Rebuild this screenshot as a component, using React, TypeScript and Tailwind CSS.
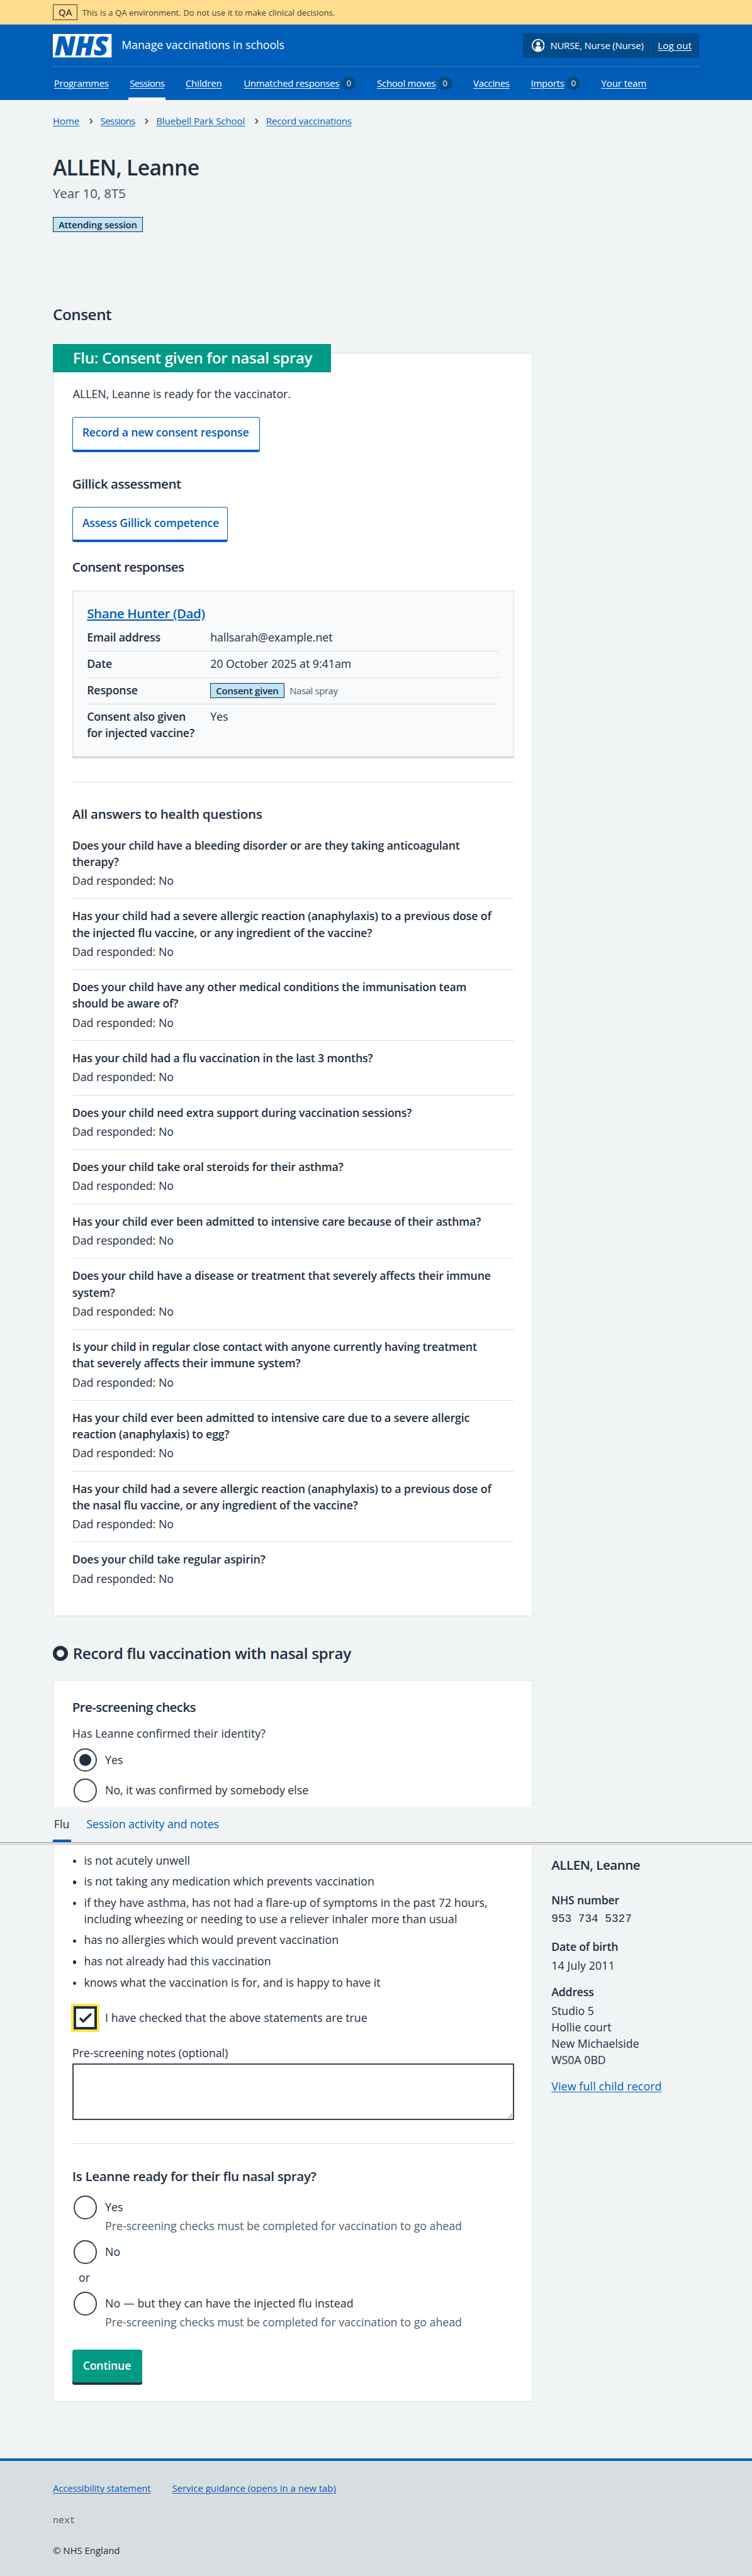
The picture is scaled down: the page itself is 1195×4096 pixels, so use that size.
import type { ReactNode } from "react";

const INK = "text-[#202e40]";

const navItems = [
  { label: "Programmes", box: "w-[93px]", track: "tracking-[-0.02em]" },
  { label: "Sessions", box: "w-[59px]", track: "tracking-[-0.04em]", active: true },
  { label: "Children", box: "w-[63px]", track: "tracking-[-0.01em]" },
  { label: "Unmatched responses", box: "w-[191px]", track: "tracking-[-0.017em]", count: 0 },
  { label: "School moves", box: "w-[128px]", track: "tracking-[-0.015em]", count: 0 },
  { label: "Vaccines", box: "w-[62px]", track: "tracking-[-0.02em]" },
  { label: "Imports", box: "w-[84px]", track: "tracking-[-0.015em]", count: 0 },
  { label: "Your team", box: "w-[77px]", track: "tracking-[-0.003em]" },
];

const questions: string[][] = [
  ["Does your child have a bleeding disorder or are they taking anticoagulant", "therapy?"],
  ["Has your child had a severe allergic reaction (anaphylaxis) to a previous dose of", "the injected flu vaccine, or any ingredient of the vaccine?"],
  ["Does your child have any other medical conditions the immunisation team", "should be aware of?"],
  ["Has your child had a flu vaccination in the last 3 months?"],
  ["Does your child need extra support during vaccination sessions?"],
  ["Does your child take oral steroids for their asthma?"],
  ["Has your child ever been admitted to intensive care because of their asthma?"],
  ["Does your child have a disease or treatment that severely affects their immune", "system?"],
  ["Is your child in regular close contact with anyone currently having treatment", "that severely affects their immune system?"],
  ["Has your child ever been admitted to intensive care due to a severe allergic", "reaction (anaphylaxis) to egg?"],
  ["Has your child had a severe allergic reaction (anaphylaxis) to a previous dose of", "the nasal flu vaccine, or any ingredient of the vaccine?"],
  ["Does your child take regular aspirin?"],
];

const statements: string[][] = [
  ["is not acutely unwell"],
  ["is not taking any medication which prevents vaccination"],
  ["if they have asthma, has not had a flare-up of symptoms in the past 72 hours,", "including wheezing or needing to use a reliever inhaler more than usual"],
  ["has no allergies which would prevent vaccination"],
  ["has not already had this vaccination"],
  ["knows what the vaccination is for, and is happy to have it"],
];

function Lines({ lines }: { lines: string[] }) {
  return (
    <>
      {lines.map((line) => (
        <span key={line} className="block whitespace-nowrap">{line}</span>
      ))}
    </>
  );
}

function QaBanner() {
  return (
    <div className="flex h-[42px] w-full items-center bg-[#ffdc8e] pl-[90px] text-[#4a3b3c]">
      <span className="flex h-[26px] w-[42px] items-center justify-center border border-[#4a3b3c] text-[16px] leading-6 font-semibold">QA</span>
      <span className="ml-2 pt-px text-[14px] leading-6 tracking-[0.006em] whitespace-nowrap">
        This is a QA environment. Do not use it to make clinical decisions.
      </span>
    </div>
  );
}

function Header() {
  return (
    <header className="h-[128px] w-full bg-[#005eb8] text-white">
      <div className="ml-[90px] flex h-[72px] w-[1101px] items-center border-b border-[#3a7cbc]">
        <svg className="h-10 w-[100px] overflow-visible" viewBox="0 0 100 40" role="img" aria-label="NHS">
          <rect width="100" height="40" fill="#fff" />
          <text x="3" y="36.2" fontFamily="Open Sans" fontSize="46" fontWeight="800" fontStyle="italic" fill="#005eb8" stroke="#005eb8" strokeWidth="0.8" textLength="91" lengthAdjust="spacingAndGlyphs">NHS</text>
        </svg>
        <span className="ml-[17px] pb-[3px] text-[19px] leading-7 whitespace-nowrap">Manage vaccinations in schools</span>
        <div className="ml-auto flex h-[42px] w-[300px] items-stretch rounded bg-[#004b88] text-[16px] leading-6 whitespace-nowrap">
          <div className="flex w-[216px] items-center pl-[14px]">
            <svg className="h-[22px] w-[22px]" viewBox="0 0 22 22" fill="none">
              <circle cx="11" cy="11" r="10" stroke="#fff" strokeWidth="2" />
              <circle cx="11" cy="8" r="3.3" fill="#fff" />
              <path d="M6 18v-2c0-2.200 1.300-3.600 3.200-3.600h3.600c1.900 0 3.200 1.400 3.200 3.600v2A9 9 0 0 1 11 20.500 9 9 0 0 1 6 18Z" fill="#fff" />
            </svg>
            <span className="ml-[10px] tracking-[-0.013em]">NURSE, Nurse (Nurse)</span>
          </div>
          <div className="my-px flex items-center border-l border-[#005eb8] pl-3">
            <a className="tracking-[0.018em] underline decoration-1 underline-offset-2">Log out</a>
          </div>
        </div>
      </div>
      <nav className="flex h-14 gap-9 pl-[92px] text-[16px] leading-6">
        {navItems.map((item) => (
          <div key={item.label} className={`relative flex items-center gap-1 whitespace-nowrap ${item.box}`}>
            <a className={`underline decoration-1 underline-offset-2 ${item.track}`}>{item.label}</a>
            {item.count !== undefined && (
              <span className="ml-auto flex h-[22px] w-6 items-center justify-center rounded-full bg-[#004b88] text-[14px] leading-none">{item.count}</span>
            )}
            {item.active && <span className="absolute -inset-x-0.5 bottom-0 h-1 bg-white" />}
          </div>
        ))}
      </nav>
    </header>
  );
}

function Crumb({ children, box, last }: { children: ReactNode; box: string; last?: boolean }) {
  return (
    <li className={`flex items-center ${box}`}>
      <a className="text-[#005eb8] underline decoration-1 underline-offset-2">{children}</a>
      {!last && (
        <svg className="mr-[13px] ml-auto h-[10px] w-[6px]" viewBox="0 0 6 10" fill="none" stroke="#4a3b3c" strokeWidth="1.7">
          <path d="M1 1l4 4-4 4" />
        </svg>
      )}
    </li>
  );
}

function Tag({ children, box }: { children: ReactNode; box: string }) {
  return (
    <span className={`flex h-[26px] items-center justify-center border border-[#202e40] bg-[#bfe4f3] text-[16px] leading-6 font-semibold tracking-[-0.012em] whitespace-nowrap text-[#1b2b48] ${box}`}>
      {children}
    </span>
  );
}

function OutlineButton({ children, box }: { children: ReactNode; box: string }) {
  return (
    <button className={`block h-[60px] rounded border-2 border-b-[4.3px] border-[#005eb8] bg-white pb-[4px] pl-4 text-left text-[19px] leading-7 font-semibold tracking-[-0.012em] whitespace-nowrap text-[#005eb8] ${box}`}>
      {children}
    </button>
  );
}

function H3({ children, className }: { children: ReactNode; className: string }) {
  return <h3 className={`text-[22px] leading-8 font-semibold whitespace-nowrap ${className}`}>{children}</h3>;
}

function SummaryRow({ label, children }: { label: ReactNode; children: ReactNode }) {
  return (
    <div className="flex h-[45px] border-b border-[#d8dde0] pt-[6.6px] last:h-auto last:border-0">
      <dt className="w-[210px] shrink-0 font-semibold tracking-[-0.01em] whitespace-nowrap">{label}</dt>
      <dd className="whitespace-nowrap">{children}</dd>
    </div>
  );
}

function Radio({ label, checked, className }: { label: string; checked?: boolean; className: string }) {
  return (
    <label className={`ml-0.5 flex h-10 items-center ${className}`}>
      <span className="flex h-10 w-10 items-center justify-center rounded-full border-[2.2px] border-[#44403f]">
        {checked && <span className="h-5 w-5 rounded-full bg-[#202e40]" />}
      </span>
      <span className="ml-[14px] pb-[2px] whitespace-nowrap">{label}</span>
    </label>
  );
}

function ConsentCard() {
  return (
    <section className="mt-[47px] h-[2153px] w-[818px] border border-[#d8dde0] bg-white px-8">
      <h2 className="-mt-4 -ml-[33px] h-12 w-[474px] bg-[#009a85] pt-[5px] pl-[34px] text-[26px] leading-9 font-semibold tracking-[-0.015em] whitespace-nowrap text-white">
        Flu: Consent given for nasal spray
      </h2>
      <p className="mt-[22.6px] pl-px">ALLEN, Leanne is ready for the vaccinator.</p>
      <OutlineButton box="mt-[25.4px] w-[320px]">Record a new consent response</OutlineButton>
      <H3 className="mt-[39px] tracking-[-0.023em]">Gillick assessment</H3>
      <OutlineButton box="mt-[23px] w-[265px]">Assess Gillick competence</OutlineButton>
      <H3 className="mt-[27px] tracking-[-0.029em]">Consent responses</H3>

      <div className="mt-[23px] h-[286px] w-[752px] border border-b-[4.3px] border-[#d8dde0] bg-[#f8fafb] px-6 pt-[23px]">
        <H3 className="tracking-[-0.02em] text-[#005eb8]">
          <a className="underline decoration-2 underline-offset-2">Shane Hunter (Dad)</a>
        </H3>
        <dl className="mt-[3px]">
          <SummaryRow label="Email address">hallsarah@example.net</SummaryRow>
          <SummaryRow label="Date">20 October 2025 at 9:41am</SummaryRow>
          <SummaryRow label="Response">
            <span className="flex items-center gap-[9px] pt-[2.4px]">
              <Tag box="w-[126px]">Consent given</Tag>
              <span className="text-[16px] leading-6 tracking-[-0.026em] text-[#4c6272]">Nasal spray</span>
            </span>
          </SummaryRow>
          <SummaryRow label={<Lines lines={["Consent also given", "for injected vaccine?"]} />}>Yes</SummaryRow>
        </dl>
      </div>

      <hr className="mt-10 w-[752px] border-[#d8dde0]" />
      <H3 className="mt-[39px] tracking-[-0.013em]">All answers to health questions</H3>
      <dl className="mt-[7px] w-[752px]">
        {questions.map((lines) => (
          <div key={lines.join()} className="border-b border-[#d8dde0] pt-[15px] pb-[16.4px] last:border-0">
            <dt className="font-semibold tracking-[-0.008em]">
              <Lines lines={lines} />
            </dt>
            <dd className="mt-[4.4px]">Dad responded: No</dd>
          </div>
        ))}
      </dl>
    </section>
  );
}

function VaccinationCard() {
  return (
    <section className="mt-[27px] h-[1231px] w-[818px] border border-[#d8dde0] bg-white px-8 pt-[30.5px]">
      <H3 className="tracking-[-0.029em]">Pre-screening checks</H3>
      <p className="mt-[14px] tracking-[0.005em]">Has Leanne confirmed their identity?</p>
      <Radio className="mt-[11.4px]" label="Yes" checked />
      <Radio className="mt-3" label="No, it was confirmed by somebody else" />

      <ul className="mt-[84.6px] flex flex-col gap-2">
        {statements.map((lines) => (
          <li key={lines[0]} className="flex">
            <span className="mt-[13px] mr-[13px] ml-px h-[6px] w-[6px] shrink-0 rounded-full bg-[#202e40]" />
            <span className="tracking-[0.002em]">
              <Lines lines={lines} />
            </span>
          </li>
        ))}
      </ul>

      <label className="mt-[27px] ml-0.5 flex h-10 items-center">
        <span className="flex h-10 w-10 items-center justify-center border-[4.3px] border-[#202e40] bg-white outline-[4.3px] outline-[#ffe744] outline-solid">
          <svg className="h-[18px] w-[23px]" viewBox="0 0 23 18" fill="none" stroke="#202e40" strokeWidth="3.800">
            <path d="M2 9.500l5.700 5.700L21.300 2" />
          </svg>
        </span>
        <span className="ml-[14px] pb-[2px] tracking-[0.003em] whitespace-nowrap">I have checked that the above statements are true</span>
      </label>

      <p className="mt-[25px]">Pre-screening notes (optional)</p>
      <textarea className="mt-[5px] block h-24 w-[752px] resize border-[2.2px] border-[#4a3d3e] bg-white" />

      <hr className="mt-10 w-[752px] border-[#d8dde0]" />
      <H3 className="mt-[39px] tracking-[-0.016em]">Is Leanne ready for their flu nasal spray?</H3>
      <Radio className="mt-[17px]" label="Yes" />
      <p className="-mt-[3px] pl-14 whitespace-nowrap text-[#4c6272]">Pre-screening checks must be completed for vaccination to go ahead</p>
      <Radio className="mt-[11px]" label="No" />
      <p className="mt-[9px] pl-[11px]">or</p>
      <Radio className="mt-[11px] tracking-[0.005em]" label="No — but they can have the injected flu instead" />
      <p className="-mt-[3px] pl-14 whitespace-nowrap text-[#4c6272]">Pre-screening checks must be completed for vaccination to go ahead</p>
      <button className="mt-[33px] block h-[60px] w-[119px] rounded bg-[#009a85] pb-[6px] pl-[18px] text-left leading-7 font-semibold tracking-[-0.01em] text-white shadow-[inset_0_-4px_0_#202e40]">
        Continue
      </button>
    </section>
  );
}

function ChildSummary() {
  return (
    <aside className="mt-[2766px] ml-[31px]">
      <H3 className="tracking-[-0.023em]">ALLEN, Leanne</H3>
      <dl className="mt-[29.6px] whitespace-nowrap">
        <dt className="font-semibold tracking-[-0.012em]">NHS number</dt>
        <dd className="mt-1 font-['Liberation_Mono',monospace]">953 734 5327</dd>
        <dt className="mt-[19px] font-semibold tracking-[-0.012em]">Date of birth</dt>
        <dd className="mt-1 tracking-[0.008em]">14 July 2011</dd>
        <dt className="mt-[17px] font-semibold tracking-[-0.012em]">Address</dt>
        <dd className="mt-1">
          <Lines lines={["Studio 5", "Hollie court", "New Michaelside", "WS0A 0BD"]} />
        </dd>
      </dl>
      <a className="mt-[17px] block tracking-[0.009em] whitespace-nowrap text-[#005eb8] underline decoration-1 underline-offset-2">View full child record</a>
    </aside>
  );
}

function StickyTabs() {
  return (
    <div className="absolute inset-x-0 top-[3079px] h-[65px] border-b-[4.3px] border-[#d8dde0] bg-[#f0f4f5]">
      <div className="flex h-[60.7px] border-b border-[#b9a392] pl-[90px] whitespace-nowrap">
        <div className="flex w-[31px] flex-col justify-between border-b-[4.3px] border-[#005eb8] pt-[14.6px] pl-0.5">Flu</div>
        <a className="ml-[26px] pt-[14.6px] tracking-[-0.002em] text-[#005eb8]">Session activity and notes</a>
      </div>
    </div>
  );
}

export default function App() {
  return (
    <div className="h-[4096px] w-full overflow-hidden bg-[#d8dde0]">
      <div className={`relative w-full bg-[#f0f4f5] font-['Open_Sans',sans-serif] text-[19px] leading-7 [zoom:0.9332] ${INK}`}>
        <QaBanner />
        <Header />
        <main className="pt-6 pl-[90px]">
          <ol className="flex text-[16px] leading-6 whitespace-nowrap">
            <Crumb box="w-[81px]">Home</Crumb>
            <Crumb box="w-[95px] tracking-[-0.04em]">Sessions</Crumb>
            <Crumb box="w-[187px]">Bluebell Park School</Crumb>
            <Crumb box="tracking-[-0.008em]" last>Record vaccinations</Crumb>
          </ol>
          <h1 className="mt-[43px] text-[36px] leading-[48px] font-semibold tracking-[-0.019em]">ALLEN, Leanne</h1>
          <p className="mt-[4.5px] text-[22px] leading-8 tracking-[-0.005em] text-[#44525f]">Year 10, 8T5</p>
          <Tag box="mt-[24.5px] w-[153px]">Attending session</Tag>
          <div className="flex">
            <div className="pt-[122px]">
              <h2 className="text-[26px] leading-9 font-semibold tracking-[-0.018em]">Consent</h2>
              <ConsentCard />
              <h2 className="mt-[45px] flex items-center gap-2 text-[26px] leading-9 font-semibold tracking-[-0.015em]">
                <span className="mt-px h-[26px] w-[26px] rounded-full border-[6.500px] border-[#202e40]" />
                Record flu vaccination with nasal spray
              </h2>
              <VaccinationCard />
            </div>
            <ChildSummary />
          </div>
        </main>
        <footer className="mt-24 h-[202px] w-full border-t-[4.3px] border-[#005eb8] bg-[#d8dde0] pt-[34px] pl-[90px] text-[16px] leading-6">
          <div className="flex gap-[37px] whitespace-nowrap text-[#005eb8] underline decoration-1 underline-offset-2">
            <a className="w-[166px] tracking-[-0.008em]">Accessibility statement</a>
            <a>Service guidance (opens in a new tab)</a>
          </div>
          <p className="mt-8 font-['Liberation_Mono',monospace] text-[#4c6272]">next</p>
          <p className="mt-[26px]">© NHS England</p>
        </footer>
        <StickyTabs />
      </div>
    </div>
  );
}
